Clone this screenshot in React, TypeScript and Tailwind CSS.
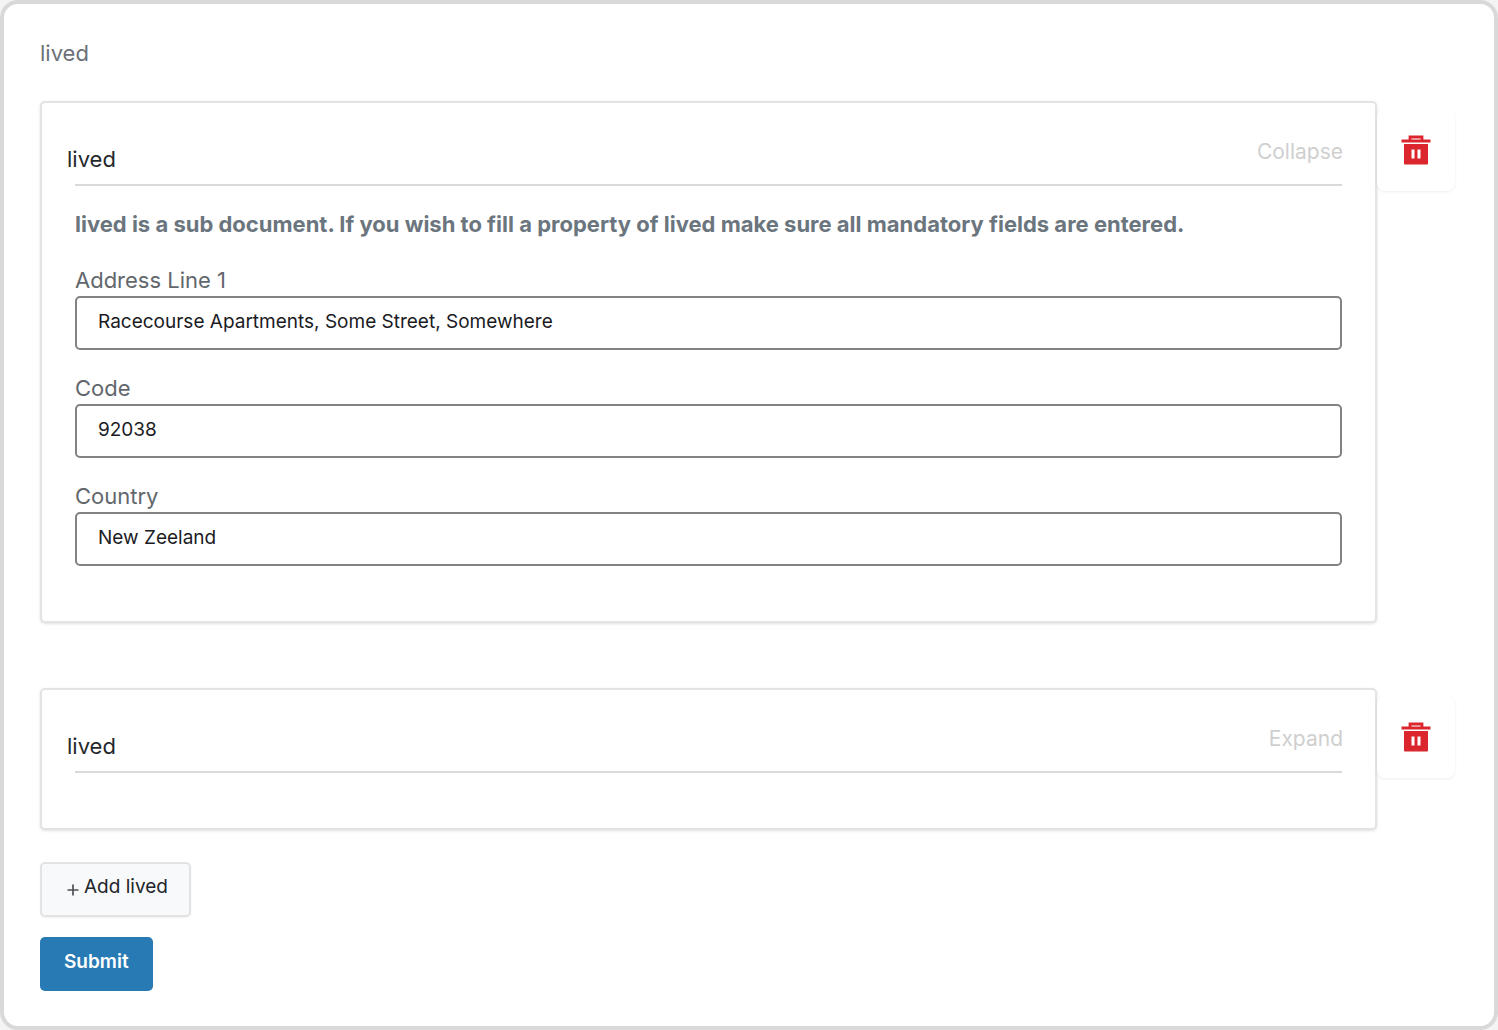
import { useId, useState } from "react";

type Address = { line: string; code: string; country: string };

function TrashIcon() {
  return (
    <svg width="30" height="30" viewBox="0 0 30 30" fill="none" aria-hidden="true">
      <path d="M9 5V2h12v3" stroke="#da262c" strokeWidth="2.8" />
      <path d="M0.5 4.5h29v3h-29z" fill="#da262c" />
      <path
        fillRule="evenodd"
        d="M3 9h24v19.5a1 1 0 0 1-1 1H4a1 1 0 0 1-1-1zM10.5 14.5v9h3v-9zM16.5 14.5v9h3v-9z"
        fill="#da262c"
      />
    </svg>
  );
}

function Field({ label, value }: { label: string; value: string }) {
  const id = useId();
  return (
    <div className="flex flex-col gap-[3px]">
      <label htmlFor={id} className="text-[22px] leading-[26px] text-[#62676c]">
        {label}
      </label>
      <input
        id={id}
        type="text"
        defaultValue={value}
        className="h-[54px] w-full rounded-[5px] border-2 border-[#808284] bg-white px-[21px] pb-1 text-[19px] text-[#1b1b1f] outline-none"
      />
    </div>
  );
}

function SubDocument({ address, initiallyOpen }: { address: Address; initiallyOpen: boolean }) {
  const [open, setOpen] = useState(initiallyOpen);
  return (
    <div className="flex items-start">
      <section className="min-w-0 flex-1 rounded-[5px] border-2 border-[#e3e3e3] bg-white px-[25px] pt-9 pb-[55px] shadow-[0_1px_3px_rgba(0,0,0,0.12)]">
        <div className="flex items-start justify-between pr-[7px]">
          <h2 className="pt-[7px] text-[22px] leading-[26px] text-[#24282c]">lived</h2>
          <button
            type="button"
            aria-expanded={open}
            onClick={() => setOpen(!open)}
            className="text-[21px] leading-[26px] text-[#cfcfcf]"
          >
            {open ? "Collapse" : "Expand"}
          </button>
        </div>
        <hr className="mx-2 mt-3 border-t-2 border-[#d9d9d9]" />
        {open && (
          <div className="mx-2 flex flex-col gap-[25px] pt-6">
            <p className="pb-1 text-[22px] leading-7 font-bold text-[#6b757e]">
              lived is a sub document. If you wish to fill a property of lived make sure all mandatory fields are
              entered.
            </p>
            <Field label="Address Line 1" value={address.line} />
            <Field label="Code" value={address.code} />
            <Field label="Country" value={address.country} />
          </div>
        )}
      </section>
      <button
        type="button"
        aria-label="Delete lived"
        className="mt-2 flex h-[82px] w-[78px] items-center justify-center rounded-lg bg-white shadow-[0_1px_3px_rgba(0,0,0,0.07)]"
      >
        <TrashIcon />
      </button>
    </div>
  );
}

export default function App() {
  return (
    <div className="min-h-screen bg-[#f4f4f4] font-['Inter',sans-serif]">
      <form
        onSubmit={(e) => e.preventDefault()}
        className="flex min-h-screen flex-col items-stretch rounded-[18px] border-4 border-[#d9d9d9] bg-white pt-9 pr-[39px] pb-8 pl-9"
      >
        <h1 className="text-[22px] leading-[26px] text-[#6b7178]">lived</h1>
        <div className="mt-[35px] flex flex-col gap-[65px]">
          <SubDocument
            initiallyOpen
            address={{ line: "Racecourse Apartments, Some Street, Somewhere", code: "92038", country: "New Zeeland" }}
          />
          <SubDocument initiallyOpen={false} address={{ line: "", code: "", country: "" }} />
        </div>
        <div className="mt-8 flex flex-col items-start gap-5">
          <button
            type="button"
            className="flex h-[55px] items-center gap-[5px] rounded-[5px] border-2 border-[#e3e3e3] bg-[#f8f9fb] pr-[21px] pb-1 pl-[25px] text-[19px] text-[#212529] shadow-[0_1px_2px_rgba(0,0,0,0.06)]"
          >
            <svg width="12" height="12" viewBox="0 0 12 12" className="mt-1" aria-hidden="true">
              <path d="M6 0.5v11M0.5 6h11" stroke="#4c5054" strokeWidth="1.7" />
            </svg>
            Add lived
          </button>
          <button
            type="submit"
            className="h-[54px] rounded-[5px] bg-[#287ab5] px-6 pb-1 text-[19px] font-semibold text-white"
          >
            Submit
          </button>
        </div>
      </form>
    </div>
  );
}
